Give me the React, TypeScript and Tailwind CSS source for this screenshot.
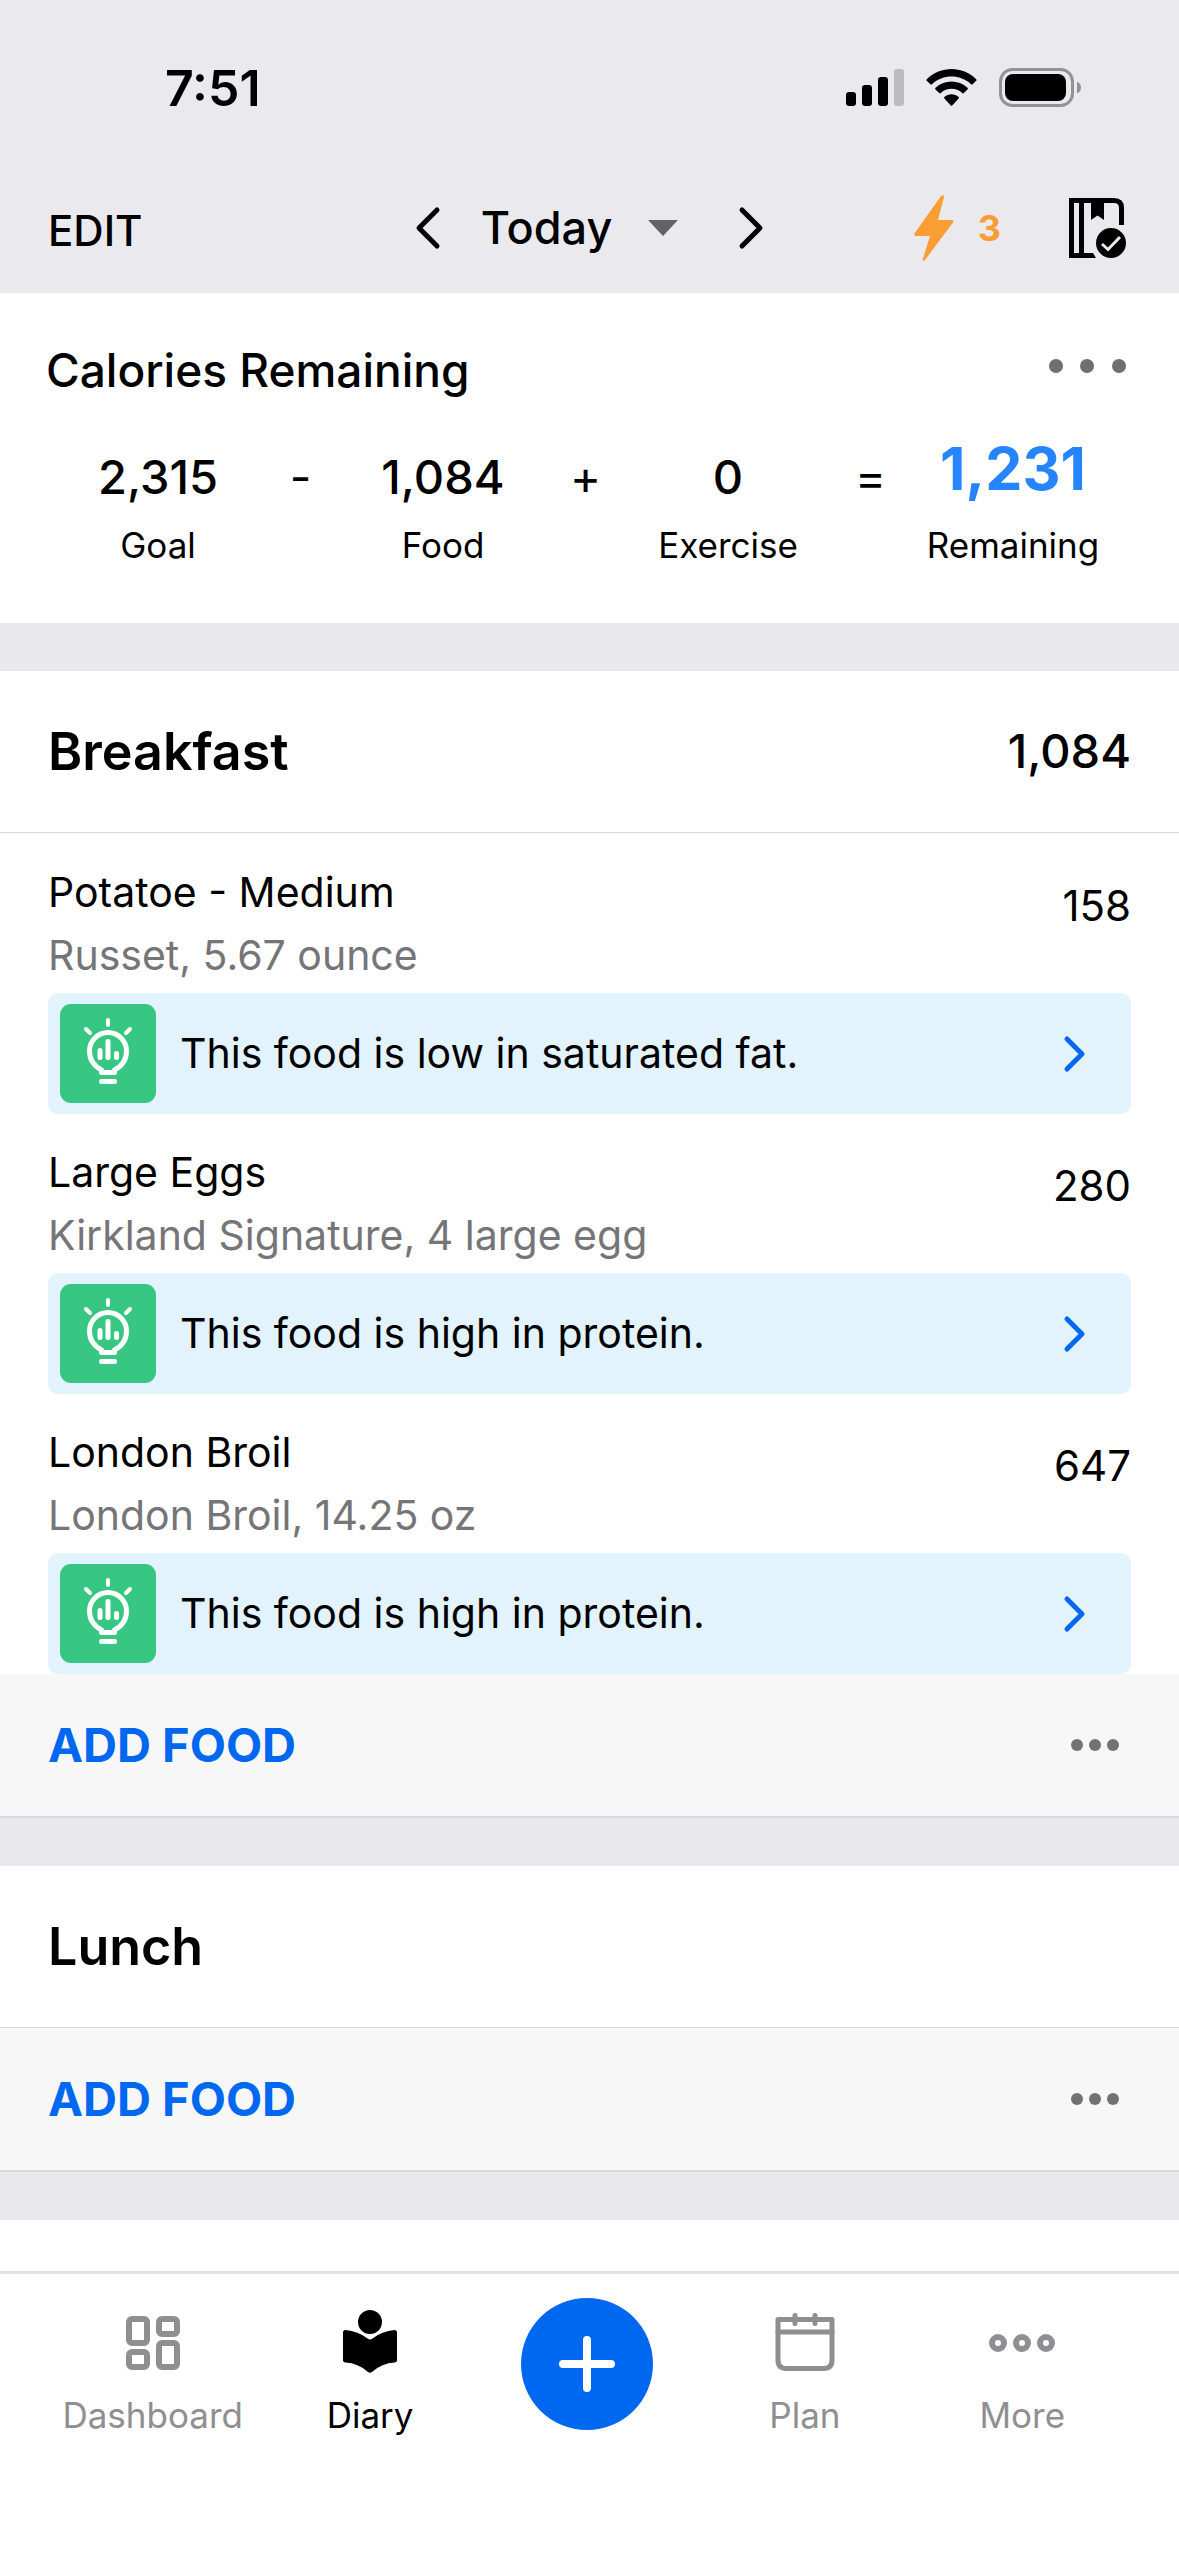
import type { ReactNode } from "react";

type Food = {
  name: string;
  detail: string;
  calories: number;
  tip: string;
};

const BREAKFAST: Food[] = [
  {
    name: "Potatoe - Medium",
    detail: "Russet, 5.67 ounce",
    calories: 158,
    tip: "This food is low in saturated fat.",
  },
  {
    name: "Large Eggs",
    detail: "Kirkland Signature, 4 large egg",
    calories: 280,
    tip: "This food is high in protein.",
  },
  {
    name: "London Broil",
    detail: "London Broil, 14.25 oz",
    calories: 647,
    tip: "This food is high in protein.",
  },
];

function StatusBar() {
  return (
    <div className="flex h-[176px] items-center justify-between pr-[98px] pl-[165px]">
      <span className="text-[50px] font-semibold">7:51</span>
      <div className="flex items-center gap-[22px]">
        <svg width="58" height="38" viewBox="0 0 58 38">
          <rect x="0" y="23" width="10" height="14" rx="3" />
          <rect x="16" y="16" width="10" height="21" rx="3" />
          <rect x="32" y="8" width="10" height="29" rx="3" />
          <rect x="48" y="0" width="10" height="37" rx="3" fill="#bcbbc0" />
        </svg>
        <svg width="51" height="38" viewBox="0 0 51 38">
          <path d="M0.8 10.2 C14.5 -3.4 36.5 -3.4 50.2 10.2 Q51 11 50.2 11.8 L46.6 15.2 Q45.8 16 45 15.2 C34 5 17 5 6 15.2 Q5.2 16 4.4 15.2 L0.8 11.8 Q0 11 0.8 10.2 Z" />
          <path d="M9.5 18.8 C18.5 10.4 32.5 10.4 41.5 18.8 Q42.3 19.6 41.5 20.4 L37.8 24 Q37 24.8 36.2 24 C30 18.4 21 18.4 14.8 24 Q14 24.8 13.2 24 L9.5 20.4 Q8.7 19.6 9.5 18.8 Z" />
          <path d="M18.4 28 C22.4 24.4 28.6 24.4 32.6 28 Q33.4 28.8 32.6 29.6 L26.4 36.2 Q25.5 37.2 24.6 36.2 L18.4 29.6 Q17.6 28.8 18.4 28 Z" />
        </svg>
        <svg width="82" height="40" viewBox="0 0 82 40">
          <rect x="1.5" y="1.5" width="72" height="36" rx="12" fill="none" stroke="#929196" strokeWidth="3" />
          <rect x="6" y="6" width="61" height="27" rx="8" />
          <path d="M78 13.5 Q82 15.5 82 19.5 Q82 23.5 78 25.5 Z" fill="#929196" />
        </svg>
      </div>
    </div>
  );
}

function Chevron({ left = false }: { left?: boolean }) {
  return (
    <svg width="26" height="44" viewBox="0 0 26 44" fill="none" stroke="currentColor" strokeWidth="5" strokeLinecap="round" strokeLinejoin="round">
      <path d={left ? "M22 4 L4 22 L22 40" : "M4 4 L22 22 L4 40"} />
    </svg>
  );
}

function DiaryHeader() {
  return (
    <div className="grid h-[104px] grid-cols-[1fr_auto_1fr] items-center px-12">
      <button className="justify-self-start pt-1 text-[42px] font-medium">EDIT</button>
      <div className="flex items-center gap-10">
        <button aria-label="Previous day">
          <Chevron left />
        </button>
        <button className="flex items-center gap-9 text-[45px] leading-[56px] font-medium">
          Today
          <svg width="30" height="16" viewBox="0 0 30 16" fill="#636366">
            <path d="M0 0 H30 L15 16 Z" />
          </svg>
        </button>
        <button aria-label="Next day" className="ml-5">
          <Chevron />
        </button>
      </div>
      <div className="mr-1 flex items-center gap-[68px] justify-self-end">
        <button className="flex items-center gap-6 text-[36px] font-bold text-[#fa9d32]">
          <svg width="40" height="66" viewBox="0 0 40 66" fill="currentColor">
            <path d="M27 1 Q30 -1 30 2 L24 25 H38 Q40 25.500 39 27.500 L11 65 Q8.500 67 8.800 64 L16 41 H1.500 Q-0.500 40.500 0.500 38.500 Z" />
          </svg>
          3
        </button>
        <button aria-label="Complete diary">
          <svg width="58" height="61" viewBox="0 0 58 61">
            <path d="M2.500 2.500 H45 Q52.500 2.500 52.500 10 V27" fill="none" stroke="black" strokeWidth="5" />
            <path d="M0 0 H5 V55 H24 L27 60 H0 Z" />
            <rect x="10" y="3" width="5" height="54" />
            <path d="M22 3 H35 V22 L28.500 17.500 L22 22 Z" />
            <circle cx="42" cy="45" r="15" />
            <path d="M33 46 L39 51.500 L51 39" fill="none" stroke="#eae9ee" strokeWidth="3" />
          </svg>
        </button>
      </div>
    </div>
  );
}

function Total({ value, label }: { value: string; label: string }) {
  return (
    <div className="flex flex-col items-center">
      <span className="text-[47px] leading-[64px] font-medium">{value}</span>
      <span className="mt-[14px] text-[35px] leading-[44px]">{label}</span>
    </div>
  );
}

function Sign({ children }: { children: ReactNode }) {
  return <span className="text-center text-[47px] leading-[64px]">{children}</span>;
}

function CaloriesRemaining() {
  return (
    <section className="pt-[49px] pb-14">
      <div className="flex items-center justify-between pr-[53px] pl-[46px]">
        <h2 className="text-[46px] leading-[56px] font-medium">Calories Remaining</h2>
        <button aria-label="Calories options">
          <svg width="77" height="24" viewBox="0 0 77 24" fill="#6f6f71">
            <circle cx="7" cy="8" r="7" />
            <circle cx="38" cy="8" r="7" />
            <circle cx="70" cy="8" r="7" />
          </svg>
        </button>
      </div>
      <div className="mt-[47px] grid grid-cols-[4fr_1fr_4fr_1fr_4fr_1fr_4fr] pr-[52px] pl-11">
        <Total value="2,315" label="Goal" />
        <Sign>-</Sign>
        <Total value="1,084" label="Food" />
        <Sign>+</Sign>
        <Total value="0" label="Exercise" />
        <Sign>=</Sign>
        <div className="flex flex-col items-center">
          <span className="text-[59px] leading-[48px] font-bold text-[#2684ff]">1,231</span>
          <span className="mt-[30px] text-[35px] leading-[44px]">Remaining</span>
        </div>
      </div>
    </section>
  );
}

function BulbIcon() {
  return (
    <svg width="96" height="99" viewBox="0 0 96 99" fill="none" stroke="white" strokeLinecap="round">
      <rect width="96" height="99" rx="11" fill="#38c782" stroke="none" />
      <path d="M48 16 V21 M26 25 L30 29 M70 25 L66 29" strokeWidth="4" />
      <path d="M41.500 68.500 V66 C34 62 29.500 55 29.500 47 A18.500 18.500 0 0 1 66.500 47 C66.500 55 62 62 54.500 66 V68.500 Z" strokeWidth="5" strokeLinejoin="round" />
      <path d="M40 46.500 V53.500 M48 37.500 V53.500 M56.500 49.500 V53.500" strokeWidth="5" />
      <path d="M41.500 77.500 H54.500" strokeWidth="5" />
    </svg>
  );
}

function FoodRow({ food }: { food: Food }) {
  return (
    <li className="px-12 pt-[27px]">
      <div className="flex items-start justify-between">
        <div className="text-[41px] leading-[63px]">
          <p>{food.name}</p>
          <p className="text-[#757577]">{food.detail}</p>
        </div>
        <span className="text-[42px] leading-[90px]">{food.calories}</span>
      </div>
      <button className="mt-[6px] flex h-[121px] w-full items-center rounded-[10px] bg-[#e2f3fd] pr-11 pl-3 text-left">
        <BulbIcon />
        <span className="ml-6 flex-1 text-[41px]">{food.tip}</span>
        <svg width="24" height="38" viewBox="0 0 24 38" fill="none" stroke="#0068f0" strokeWidth="5" strokeLinecap="round" strokeLinejoin="round">
          <path d="M4 4 L19 19 L4 34" />
        </svg>
      </button>
    </li>
  );
}

function Meal({ title, total, foods = [] }: { title: string; total?: string; foods?: Food[] }) {
  return (
    <section className="border-t-[48px] border-[#e9e8ed]">
      <div className="flex h-[162px] items-center justify-between border-b border-[#d8d8da] px-12">
        <h2 className="text-[52px] font-semibold">{title}</h2>
        {total && <span className="text-[47px] font-medium">{total}</span>}
      </div>
      {foods.length > 0 && (
        <ul className="pt-px">
          {foods.map((food) => (
            <FoodRow key={food.name} food={food} />
          ))}
        </ul>
      )}
      <div className="flex h-[144px] items-center justify-between border-b-2 border-[#d8d7dc] bg-[#f7f7f7] pr-[60px] pl-12">
        <button className="text-[47px] font-bold text-[#0068f0]">ADD FOOD</button>
        <button aria-label={`${title} options`}>
          <svg width="49" height="14" viewBox="0 0 49 14" fill="#727272">
            <circle cx="7" cy="7" r="6" />
            <circle cx="25" cy="7" r="6" />
            <circle cx="43" cy="7" r="6" />
          </svg>
        </button>
      </div>
    </section>
  );
}

function Tab({ label, active = false, children }: { label: string; active?: boolean; children: ReactNode }) {
  return (
    <a
      href="#"
      aria-current={active ? "page" : undefined}
      className={`flex flex-col items-center gap-[17px] pt-3 ${active ? "text-black" : "text-[#8f8f91]"}`}
    >
      <svg width="68" height="66" viewBox="0 0 68 66">
        {children}
      </svg>
      <span className="text-[35px] leading-[44px]">{label}</span>
    </a>
  );
}

function TabBar() {
  return (
    <nav className="grid grid-cols-5 border-t-[3px] border-[#e2e2e3] bg-white pt-6 pr-12 pb-[119px] pl-11">
      <Tab label="Dashboard">
        <g fill="none" stroke="currentColor" strokeWidth="6">
          <rect x="10" y="9" width="18" height="24" rx="3" />
          <rect x="40" y="9" width="18" height="15" rx="3" />
          <rect x="10" y="42" width="18" height="15" rx="3" />
          <rect x="40" y="33" width="18" height="24" rx="3" />
        </g>
      </Tab>
      <Tab label="Diary" active>
        <circle cx="34" cy="12" r="12" />
        <path d="M7 22.500 Q7 20 9.500 20 Q22 21 31.500 28.500 Q34 30.500 36.500 28.500 Q46 21 58.500 20 Q61 20 61 22.500 V50 Q61 52.500 58.500 52.500 Q46 53 36 62 Q34 63.500 32 62 Q22 53 9.500 52.500 Q7 52.500 7 50 Z" />
      </Tab>
      <button aria-label="Add" className="flex size-[132px] items-center justify-center justify-self-center rounded-full bg-[#0068f0]">
        <svg width="56" height="56" viewBox="0 0 56 56" stroke="white" strokeWidth="8" strokeLinecap="round">
          <path d="M28 4 V52 M4 28 H52" />
        </svg>
      </button>
      <Tab label="Plan">
        <g fill="none" stroke="currentColor" strokeWidth="5" strokeLinecap="round" strokeLinejoin="round">
          <path d="M7 9.500 H61 V50 Q61 58.500 52.500 58.500 H15.500 Q7 58.500 7 50 Z" />
          <path d="M7 22 H61 M24 5.500 V13.500 M44 5.500 V13.500" />
        </g>
      </Tab>
      <Tab label="More">
        <g fill="none" stroke="currentColor" strokeWidth="6">
          <circle cx="10" cy="33" r="6" />
          <circle cx="34" cy="33" r="6" />
          <circle cx="58" cy="33" r="6" />
        </g>
      </Tab>
    </nav>
  );
}

export default function App() {
  return (
    <div className="flex min-h-screen flex-col bg-white font-['Inter',sans-serif] text-black">
      <header className="bg-[#eae9ee] pb-[13px]">
        <StatusBar />
        <DiaryHeader />
      </header>
      <main className="flex-1">
        <CaloriesRemaining />
        <Meal title="Breakfast" total="1,084" foods={BREAKFAST} />
        <Meal title="Lunch" />
        <div className="h-12 bg-[#e9e8ed]" />
      </main>
      <TabBar />
    </div>
  );
}
